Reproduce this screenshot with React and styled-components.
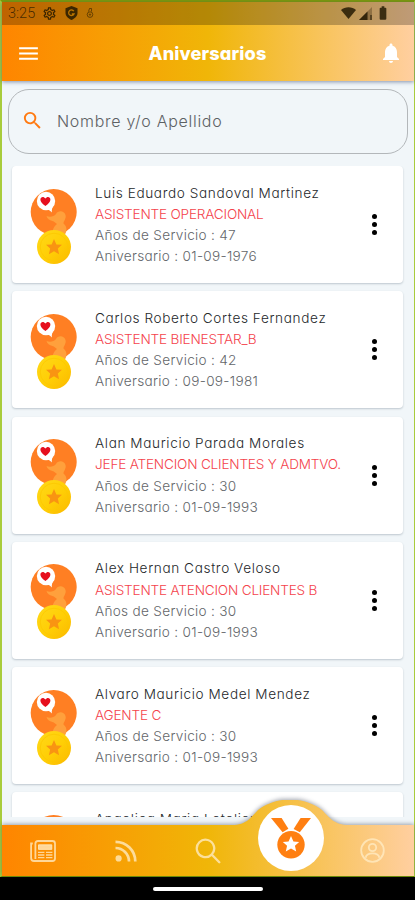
import React from 'react';
import styled, { createGlobalStyle } from 'styled-components';
import {
  MdMenu,
  MdNotifications,
  MdOutlineSettings,
  MdSearch,
  MdBatteryFull,
} from 'react-icons/md';

const GlobalStyles = createGlobalStyle`
  :root {
    --brand: linear-gradient(90deg, #ff8500 0%, #f0b608 50%, #ffcfa0 100%);
    --orange: #ff7a12;
    --red: #f4434c;
    --page: #f1f6f9;
  }
  * {
    box-sizing: border-box;
  }
  body {
    margin: 0;
    background: #000;
    font-family: Inter, 'Open Sans', sans-serif;
    font-feature-settings: 'cv11';
  }
  svg {
    display: block;
    flex-shrink: 0;
  }
`;

const Screen = styled.div`
  width: 415px;
  height: 900px;
  display: flex;
  flex-direction: column;
  overflow: hidden;
`;

const AppFrame = styled.div`
  height: 877px;
  display: flex;
  flex-direction: column;
  border: 2px solid #a8cc3c;
  border-right-width: 1px;
  border-top-color: #7d9a08;
  border-bottom: 1px solid #6f9400;
  background: var(--page);
`;

const Header = styled.header`
  position: relative;
  z-index: 1;
  flex: none;
  height: 79px;
  background: var(--brand);
  box-shadow: 0 1px 4px rgba(60, 80, 120, 0.6);
`;

const StatusBar = styled.div`
  height: 23px;
  padding: 0 23px 1px 6px;
  display: flex;
  align-items: center;
  background: rgba(0, 0, 0, 0.25);
  color: rgba(30, 22, 0, 0.82);
`;

const StatusIcons = styled.div`
  display: flex;
  align-items: center;
  gap: ${(props) => props.$gap};
`;

const Clock = styled.span`
  width: 34px;
  font-family: Roboto, sans-serif;
  font-size: 14.5px;
  font-weight: 300;
  color: rgba(50, 30, 0, 0.85);
`;

const Spacer = styled.span`
  flex: 1;
`;

const TitleBar = styled.div`
  height: 56px;
  padding: 0 11px 0 14px;
  display: flex;
  align-items: center;
  justify-content: space-between;
  color: #fff;
  h1 {
    margin: 0 5px 0 0;
    font-size: 18.2px;
    font-weight: 800;
    letter-spacing: 0.1px;
  }
`;

const SearchBox = styled.label`
  flex: none;
  height: 65px;
  margin: 8px 6px 0;
  padding: 0 12px 2px;
  display: flex;
  align-items: center;
  gap: 13px;
  border: 1px solid #b3b7ba;
  border-radius: 21px;
  color: #5d6164;
  font-size: 16px;
  font-weight: 300;
  letter-spacing: 0.7px;
  svg {
    color: var(--orange);
  }
`;

const List = styled.div`
  height: 651px;
  flex: none;
  margin-top: 12px;
  padding: 0 11px 0 10px;
  overflow: hidden;
`;

const Card = styled.article`
  height: 117px;
  margin-bottom: 8.25px;
  padding: 2px 26px 0 18px;
  display: flex;
  align-items: center;
  background: #fff;
  border-radius: 4px;
  box-shadow: 0 1px 2px rgba(70, 90, 110, 0.3);
`;

const Info = styled.div`
  flex: 1;
  min-width: 0;
  margin: 0 0 1px 17px;
`;

const Line = styled.p`
  margin: 0;
  height: 21.2px;
  line-height: 21.2px;
  white-space: nowrap;
  font-size: 13.6px;
  font-weight: 300;
  color: #63666a;
  letter-spacing: 0.3px;
`;

const Name = styled(Line)`
  color: #25282b;
  letter-spacing: 0.65px;
  word-spacing: -0.3px;
`;

const Job = styled(Line)`
  color: var(--red);
  letter-spacing: -0.2px;
`;

const MoreButton = styled.button`
  margin-bottom: 2px;
  padding: 0;
  border: 0;
  background: none;
  display: flex;
  flex-direction: column;
  gap: 3px;
  i {
    width: 5px;
    height: 5px;
    border-radius: 50%;
    background: #000;
  }
`;

const NavBar = styled.nav`
  position: relative;
  height: 51px;
  margin-top: auto;
  flex: none;
  display: flex;
  align-items: center;
  color: rgba(255, 236, 196, 0.78);
`;

const NavShadow = styled.div`
  position: absolute;
  inset: -25px 0 0;
  filter: drop-shadow(0 -1px 2px rgba(50, 60, 80, 0.45));
`;

/* the bar's background, raised in a hump behind the active tab */
const NavShape = styled.div`
  height: 76px;
  background: var(--brand);
  clip-path: path(
    'M0 25 H230 C245 25 249 17 256 10 C274 -4 302 -4 320 10 C327 17 332 25 347 25 H412 V76 H0 Z'
  );
`;

const NavItem = styled.a`
  position: relative;
  flex: 1;
  display: flex;
  justify-content: center;
`;

const ActiveTab = styled.span`
  width: 66px;
  height: 66px;
  margin: -25px 0 0 1px;
  display: flex;
  align-items: center;
  justify-content: center;
  border-radius: 50%;
  background: #fff;
`;

const SystemBar = styled.div`
  flex: 1;
  display: flex;
  align-items: center;
  justify-content: center;
  background: #000;
  &::after {
    content: '';
    width: 110px;
    height: 4px;
    border-radius: 2px;
    background: #fff;
  }
`;

const STAR =
  'M0 -10 L2.9 -3.5 L9.7 -3.1 L4.7 1.6 L6.2 8.4 L0 4.9 L-6.2 8.4 L-4.7 1.6 L-9.7 -3.1 L-2.9 -3.5 Z';

function Badge() {
  return (
    <svg width="48" height="78" viewBox="0 0 48 78">
      <defs>
        <linearGradient id="coin" x1="0" y1="0" x2="1" y2="1">
          <stop offset="0" stopColor="#ffd91a" />
          <stop offset="0.55" stopColor="#ffce05" />
          <stop offset="1" stopColor="#fbb700" />
        </linearGradient>
      </defs>
      <circle cx="23.7" cy="25" r="23" fill="#ff7f23" />
      <path
        d="M16.5 29 C20 30.5 24 29.5 26 27 C27.5 23.5 34 23 35.5 28 C36.5 31.5 33.5 34 33.5 36.5 C38 40 37 46 33 50 H22 C22 45 23 40 27 37 C25 35.5 24.5 34.5 22.5 34 C19.5 33.5 17 31.5 16.5 29 Z"
        fill="#ffa03c"
      />
      <circle cx="16" cy="14" r="9.2" fill="#fff" />
      <path d="M15 21.5 C18 22.2 20 23.2 21.8 25.6 C21.6 22.8 22.2 20.6 23.6 18 Z" fill="#fff" />
      <path
        d="M15.4 19 C11.8 16.2 10.4 14.6 10.4 12.4 C10.4 9.6 13.9 9 15.4 11.6 C16.9 9 20.4 9.6 20.4 12.4 C20.4 14.6 19 16.2 15.4 19 Z"
        fill="#e60f1e"
      />
      <circle cx="24" cy="60" r="17" fill="url(#coin)" />
      <circle cx="24" cy="60" r="13.8" fill="none" stroke="#fcc800" strokeWidth="0.8" />
      <path d={STAR} transform="translate(24 60.3) scale(0.82)" fill="#f99412" />
    </svg>
  );
}

function ShieldIcon() {
  return (
    <svg width="13" height="14" viewBox="0 0 13 14">
      <path d="M6.5 0 L12.5 2.2 V7 C12.5 10.2 9.5 12.8 6.5 14 C3.5 12.8 0.5 10.2 0.5 7 V2.2 Z" fill="currentColor" />
      <path d="M8.8 5.2 A2.8 2.8 0 1 0 9 8 H6.8" fill="none" stroke="#b97400" strokeWidth="1.3" />
    </svg>
  );
}

function DebugIcon() {
  return (
    <svg width="8" height="12" viewBox="0 0 8 12" fill="none" stroke="currentColor" strokeWidth="0.8" opacity="0.8">
      <path d="M2.5 4.5 L3.5 1.5 H5.5 V4.5" />
      <circle cx="4" cy="7.6" r="2.8" />
      <circle cx="4" cy="7.6" r="0.7" />
    </svg>
  );
}

function WifiIcon() {
  return (
    <svg width="15" height="12" viewBox="0 0 15 12">
      <path d="M0 3 C4 -0.8 11 -0.8 15 3 L7.5 12 Z" fill="currentColor" />
    </svg>
  );
}

function SignalIcon() {
  return (
    <svg width="13" height="13" viewBox="0 0 13 13">
      <path d="M13 0 V13 H0 Z" fill="currentColor" opacity="0.35" />
      <path d="M8.5 4.5 V13 H0 Z" fill="currentColor" />
      <path d="M12 8 V13" stroke="currentColor" strokeWidth="1.2" />
    </svg>
  );
}

function NewsIcon() {
  return (
    <svg width="26" height="22" viewBox="0 0 26 22" fill="none" stroke="currentColor" strokeWidth="1.8">
      <path d="M5.4 19 V3.5 C5.4 2 6.4 1 7.9 1 H22.5 C24 1 25 2 25 3.5 V18.5 C25 20 24 21 22.5 21 H4 C2.2 21 1.1 20 1.1 18 V3.5 H2.8" />
      <path d="M8.5 4.8 H21.8 V9.4 H8.5 Z" fill="currentColor" strokeWidth="1" />
      <path d="M8 12.4 H14.4 M8 15 H14.4 M8 17.6 H14.4 M16 12.4 H22.4 M16 15 H22.4 M16 17.6 H22.4" strokeWidth="1.4" />
    </svg>
  );
}

function RssIcon() {
  return (
    <svg width="22" height="22" viewBox="0 0 22 22" fill="none" stroke="currentColor" strokeWidth="2.7">
      <circle cx="3.6" cy="18.4" r="3.1" fill="currentColor" stroke="none" />
      <path d="M0.5 8 C8 8 14 14 14 21.5" />
      <path d="M0.5 1.8 C11.5 1.8 20.3 10.5 20.3 21.5" />
    </svg>
  );
}

function SearchIcon() {
  return (
    <svg width="26" height="26" viewBox="0 0 26 26" fill="none" stroke="currentColor" strokeWidth="2.3" strokeLinecap="round">
      <path d="M16.6 16.6 A8.7 8.7 0 1 1 16.7 16.5 L24.3 24.3" />
    </svg>
  );
}

function MedalIcon() {
  return (
    <svg width="42" height="42" viewBox="0 0 42 42">
      <path d="M1 1 H11.6 L18.4 11.7 L12.6 15.2 Z" fill="#ff7f11" />
      <path d="M41 1 H30.6 L23.6 12 L29.8 15.2 Z" fill="#ff7f11" />
      <circle cx="21" cy="27.7" r="13.7" fill="#ff7f11" />
      <path d={STAR} transform="translate(21 27.5) scale(0.84)" fill="#fff" />
    </svg>
  );
}

function ProfileIcon() {
  return (
    <svg width="25" height="25" viewBox="0 0 25 25" fill="none" stroke="currentColor" strokeWidth="1.8">
      <circle cx="12.5" cy="12.5" r="11.3" />
      <circle cx="12.5" cy="9.5" r="3.7" />
      <path d="M5.6 19.8 C6.8 14 18.2 14 19.4 19.8" />
    </svg>
  );
}

const people = [
  { name: 'Luis Eduardo Sandoval Martinez', job: 'ASISTENTE OPERACIONAL', years: 47, date: '01-09-1976' },
  { name: 'Carlos Roberto Cortes Fernandez', job: 'ASISTENTE BIENESTAR_B', years: 42, date: '09-09-1981' },
  { name: 'Alan Mauricio Parada Morales', job: 'JEFE ATENCION CLIENTES Y ADMTVO.', years: 30, date: '01-09-1993' },
  { name: 'Alex Hernan Castro Veloso', job: 'ASISTENTE ATENCION CLIENTES B', years: 30, date: '01-09-1993' },
  { name: 'Alvaro Mauricio Medel Mendez', job: 'AGENTE C', years: 30, date: '01-09-1993' },
  { name: 'Angelica Maria Letelier I', job: 'ASISTENTE', years: 30, date: '01-09-1993' },
];

function PersonCard({ person }) {
  return (
    <Card>
      <Badge />
      <Info>
        <Name>{person.name}</Name>
        <Job>{person.job}</Job>
        <Line>Años de Servicio : {person.years}</Line>
        <Line>Aniversario : {person.date}</Line>
      </Info>
      <MoreButton aria-label="Opciones">
        <i />
        <i />
        <i />
      </MoreButton>
    </Card>
  );
}

export default function App() {
  return (
    <Screen>
      <GlobalStyles />
      <AppFrame>
        <Header>
          <StatusBar>
            <Clock>3:25</Clock>
            <StatusIcons $gap="8px">
              <MdOutlineSettings size={15} />
              <ShieldIcon />
              <DebugIcon />
            </StatusIcons>
            <Spacer />
            <StatusIcons $gap="3px">
              <WifiIcon />
              <SignalIcon />
              <MdBatteryFull size={16} />
            </StatusIcons>
          </StatusBar>
          <TitleBar>
            <MdMenu size={25} />
            <h1>Aniversarios</h1>
            <MdNotifications size={24} />
          </TitleBar>
        </Header>
        <SearchBox>
          <MdSearch size={23} />
          <span>Nombre y/o Apellido</span>
        </SearchBox>
        <List>
          {people.map((person) => (
            <PersonCard key={person.name} person={person} />
          ))}
        </List>
        <NavBar>
          <NavShadow>
            <NavShape />
          </NavShadow>
          <NavItem>
            <NewsIcon />
          </NavItem>
          <NavItem>
            <RssIcon />
          </NavItem>
          <NavItem>
            <SearchIcon />
          </NavItem>
          <NavItem>
            <ActiveTab>
              <MedalIcon />
            </ActiveTab>
          </NavItem>
          <NavItem>
            <ProfileIcon />
          </NavItem>
        </NavBar>
      </AppFrame>
      <SystemBar />
    </Screen>
  );
}
